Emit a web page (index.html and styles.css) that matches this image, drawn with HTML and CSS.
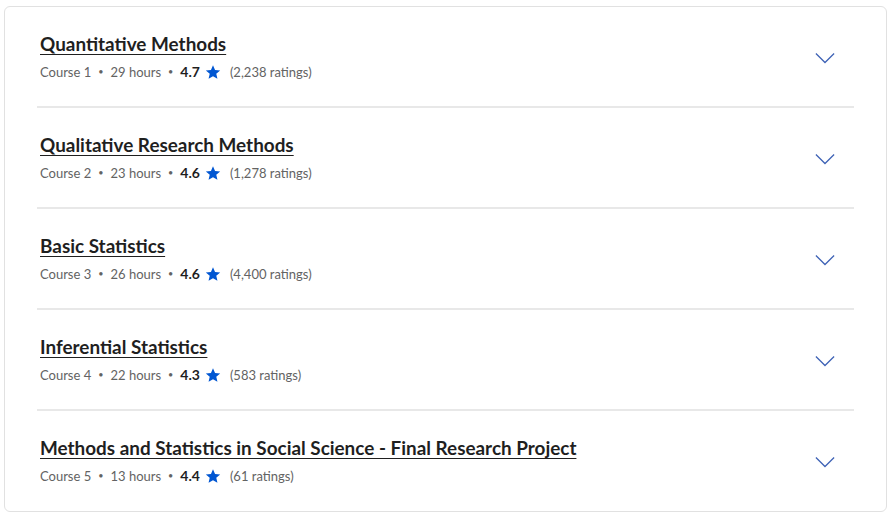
FILE: index.html
```html
<!DOCTYPE html>
<html>
<head>
<meta charset="utf-8">
<link rel="stylesheet" href="styles.css">
</head>
<body>
<div class="card">
  <div class="row">
    <div class="info">
      <a class="title" href="#">Quantitative Methods</a>
      <div class="meta"><span>Course 1</span><span class="dot">•</span><span>29 hours</span><span class="dot">•</span><span class="rating">4.7</span><svg class="star" viewBox="0 0 24 24"><path d="M12 1.8l3.05 7.1 7.7.7-5.85 5.1 1.75 7.55L12 18.3l-6.65 3.95 1.75-7.55L1.25 9.6l7.7-.7z"/></svg><span class="count">(2,238 ratings)</span></div>
    </div>
    <svg class="chev" viewBox="0 0 22 12"><path d="M1 1l10 10 10-10"/></svg>
  </div>
  <div class="row">
    <div class="info">
      <a class="title" href="#">Qualitative Research Methods</a>
      <div class="meta"><span>Course 2</span><span class="dot">•</span><span>23 hours</span><span class="dot">•</span><span class="rating">4.6</span><svg class="star" viewBox="0 0 24 24"><path d="M12 1.8l3.05 7.1 7.7.7-5.85 5.1 1.75 7.55L12 18.3l-6.65 3.95 1.75-7.55L1.25 9.6l7.7-.7z"/></svg><span class="count">(1,278 ratings)</span></div>
    </div>
    <svg class="chev" viewBox="0 0 22 12"><path d="M1 1l10 10 10-10"/></svg>
  </div>
  <div class="row">
    <div class="info">
      <a class="title" href="#">Basic Statistics</a>
      <div class="meta"><span>Course 3</span><span class="dot">•</span><span>26 hours</span><span class="dot">•</span><span class="rating">4.6</span><svg class="star" viewBox="0 0 24 24"><path d="M12 1.8l3.05 7.1 7.7.7-5.85 5.1 1.75 7.55L12 18.3l-6.65 3.95 1.75-7.55L1.25 9.6l7.7-.7z"/></svg><span class="count">(4,400 ratings)</span></div>
    </div>
    <svg class="chev" viewBox="0 0 22 12"><path d="M1 1l10 10 10-10"/></svg>
  </div>
  <div class="row">
    <div class="info">
      <a class="title" href="#">Inferential Statistics</a>
      <div class="meta"><span>Course 4</span><span class="dot">•</span><span>22 hours</span><span class="dot">•</span><span class="rating">4.3</span><svg class="star" viewBox="0 0 24 24"><path d="M12 1.8l3.05 7.1 7.7.7-5.85 5.1 1.75 7.55L12 18.3l-6.65 3.95 1.75-7.55L1.25 9.6l7.7-.7z"/></svg><span class="count">(583 ratings)</span></div>
    </div>
    <svg class="chev" viewBox="0 0 22 12"><path d="M1 1l10 10 10-10"/></svg>
  </div>
  <div class="row">
    <div class="info">
      <a class="title" href="#">Methods and Statistics in Social Science - Final Research Project</a>
      <div class="meta"><span>Course 5</span><span class="dot">•</span><span>13 hours</span><span class="dot">•</span><span class="rating">4.4</span><svg class="star" viewBox="0 0 24 24"><path d="M12 1.8l3.05 7.1 7.7.7-5.85 5.1 1.75 7.55L12 18.3l-6.65 3.95 1.75-7.55L1.25 9.6l7.7-.7z"/></svg><span class="count">(61 ratings)</span></div>
    </div>
    <svg class="chev" viewBox="0 0 22 12"><path d="M1 1l10 10 10-10"/></svg>
  </div>
</div>
</body>
</html>
```
FILE: styles.css
```css
html, body {
  margin: 0;
  padding: 0;
  background: #ffffff;
}
body {
  padding: 6px 5px 6px 4px;
  font-family: "Lato", "Liberation Sans", sans-serif;
  color: #1f1f1f;
}
.card {
  border: 1px solid #e1e1e1;
  border-radius: 6px;
  padding: 0 32px 0 32px;
  height: 506px;
  box-sizing: border-box;
}
.row {
  display: flex;
  align-items: center;
  justify-content: space-between;
  padding: 25px 19px 24px 3px;
  border-bottom: 2px solid #e8e8e8;
}
.row:last-child {
  border-bottom: none;
}
.info {
  display: flex;
  flex-direction: column;
  gap: 6px;
}
.title {
  font-size: 18.9px;
  line-height: 24px;
  font-weight: 700;
  color: #1f1f1f;
  text-decoration: underline;
  text-underline-offset: 3px;
}
.meta {
  display: flex;
  align-items: center;
  font-size: 13px;
  line-height: 20px;
  color: #636363;
}
.dot {
  font-size: 9px;
  margin: 0 7px;
  color: #636363;
}
.rating {
  font-weight: 700;
  font-size: 14px;
  color: #1f1f1f;
}
.star {
  width: 16px;
  height: 16px;
  margin: 0 9px 0 5px;
  fill: #0056d2;
}
.chev {
  width: 20px;
  height: 12px;
  fill: none;
  stroke: #3f63b6;
  stroke-width: 1.4;
  margin-top: 2px;
}
```
